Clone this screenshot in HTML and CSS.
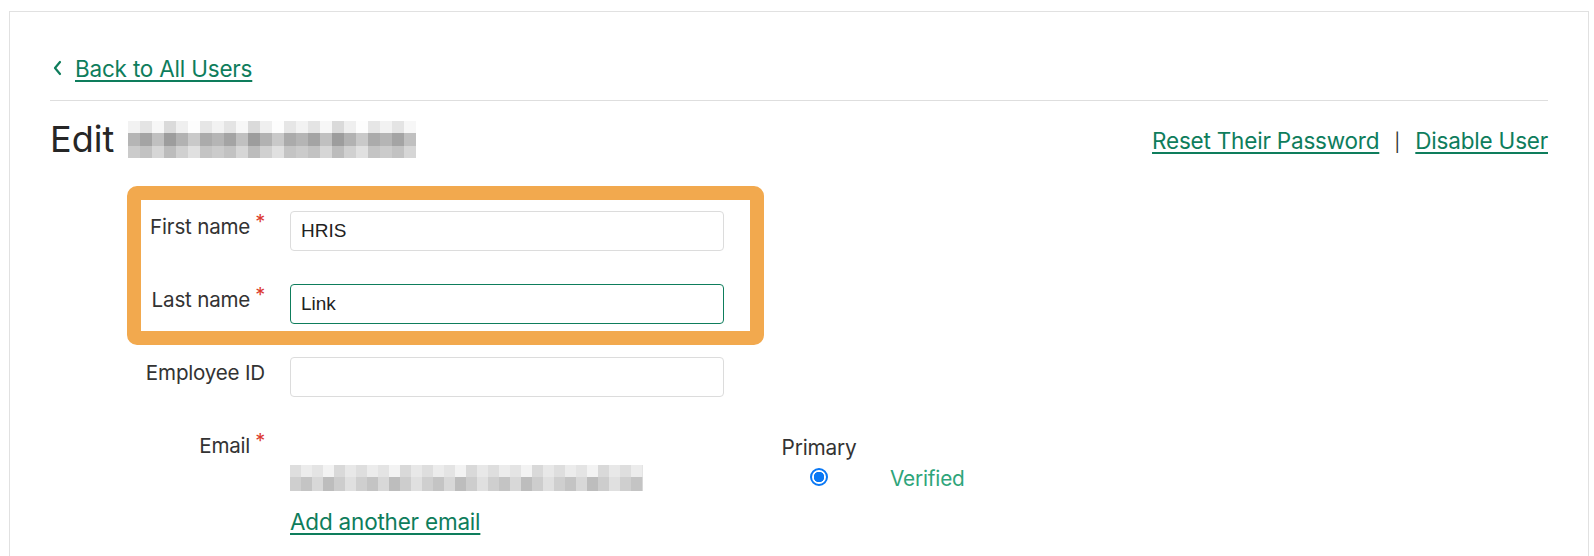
FILE: index.html
```html
<!DOCTYPE html>
<html lang="en">
<head>
<meta charset="utf-8">
<title>Edit user</title>
<link rel="stylesheet" href="styles.css">
</head>
<body>
<div class="card">
  <div class="back-row">
    <svg class="chev" width="10" height="16" viewBox="0 0 10 16"><polyline points="7,2 2,8 7,14" fill="none" stroke="#0e7d5c" stroke-width="2.2" stroke-linecap="round" stroke-linejoin="round"/></svg>
    <a class="link" href="#">Back to All Users</a>
  </div>
  <div class="rule"></div>
  <div class="head-row">
    <h1 class="title">Edit <span class="blur-name" aria-label="redacted"></span></h1>
    <div class="actions">
      <a class="link" href="#">Reset Their Password</a>
      <span class="sep">|</span>
      <a class="link" href="#">Disable User</a>
    </div>
  </div>

  <form class="form">
    <div class="highlight"></div>
    <label class="lbl">First name<span class="req">*</span></label>
    <input class="field" type="text" value="HRIS">
    <label class="lbl">Last name<span class="req">*</span></label>
    <input class="field focus" type="text" value="Link">
    <label class="lbl">Employee ID</label>
    <input class="field" type="text" value="">
    <label class="lbl lbl-email">Email<span class="req">*</span></label>
    <div class="email-cell">
      <div class="email-grid">
        <span></span>
        <span class="col-head">Primary</span>
        <span></span>
        <span class="blur-email"></span>
        <span class="radio"></span>
        <span class="verified">Verified</span>
      </div>
      <a class="link add" href="#">Add another email</a>
    </div>
  </form>
</div>
</body>
</html>
```

FILE: styles.css
```css
* { box-sizing: border-box; }
html, body { margin: 0; padding: 0; background: #fff; }
body {
  font-family: Inter, "Noto Sans", "Liberation Sans", sans-serif;
  color: #2e2e2e;
  height: 556px;
  overflow: hidden;
}
.card {
  margin: 11px 0 0 9px;
  width: 1580px;
  height: 600px;
  border: 1px solid #e1e1e1;
  border-bottom: none;
  padding: 0 40px;
}
.link {
  color: #0e7d5c;
  text-decoration: underline;
  text-decoration-thickness: 2px;
  text-underline-offset: 3px;
  font-size: 22.5px;
  letter-spacing: -0.2px;
}
.back-row {
  display: flex;
  align-items: center;
  gap: 12px;
  padding: 24px 0 0 3px;
  height: 88px;
}
.chev { flex: none; }
.rule {
  height: 1px;
  background: #dedede;
}
.head-row {
  display: flex;
  justify-content: space-between;
  align-items: flex-start;
  padding-top: 16px;
}
.title {
  margin: 0;
  font-size: 36px;
  font-weight: 400;
  color: #262626;
  display: flex;
  align-items: center;
  gap: 14px;
  line-height: 44px;
}
.blur-name {
  display: inline-block;
  width: 288px;
  height: 37px;
  background:
    repeating-linear-gradient(90deg, #f2f2f2 0 12px, #e4e4e4 12px 24px, #f7f7f7 24px 36px, #dadada 36px 48px, #efefef 48px 60px, #fdfdfd 60px 72px, #e6e6e6 72px 84px) 0 0 / 100% 12px no-repeat,
    repeating-linear-gradient(90deg, #b5b5b5 0 12px, #a4a4a4 12px 24px, #c0c0c0 24px 36px, #9d9d9d 36px 48px, #b2b2b2 48px 60px, #c9c9c9 60px 72px, #ababab 72px 84px) 0 12px / 100% 13px no-repeat,
    repeating-linear-gradient(90deg, #cbcbcb 0 12px, #c2c2c2 12px 24px, #d6d6d6 24px 36px, #bcbcbc 36px 48px, #d0d0d0 48px 60px, #e0e0e0 60px 72px, #c4c4c4 72px 84px) 0 25px / 100% 12px no-repeat;
}
.actions {
  display: flex;
  align-items: baseline;
  gap: 15px;
  padding-top: 10px;
}
.sep { font-size: 18px; color: #333; }

.form {
  position: relative;
  display: grid;
  grid-template-columns: 215px 434px;
  column-gap: 25px;
  row-gap: 33px;
  align-items: start;
  margin-top: 50px;
}
.highlight {
  position: absolute;
  left: 77px;
  top: -25px;
  width: 637px;
  height: 159px;
  border: 14px solid #f2a94e;
  border-radius: 10px;
  pointer-events: none;
}
.lbl {
  text-align: right;
  font-size: 20.6px;
  color: #333;
  padding-top: 3px;
  letter-spacing: -0.2px;
}
.req {
  color: #dc3a2f;
  font-size: 20px;
  vertical-align: top;
  position: relative;
  top: -4px;
  margin-left: 5px;
}
.field {
  width: 434px;
  height: 40px;
  border: 1px solid #dcdcdc;
  border-radius: 4px;
  padding: 0 10px;
  font-family: "Liberation Sans", Arial, sans-serif;
  font-size: 19px;
  color: #222;
  outline: none;
  background: #fff;
}
.field.focus { border-color: #0e7d5c; }
.lbl-email { padding-top: 3px; }
.email-cell { padding-top: 5px; }
.email-grid {
  display: grid;
  grid-template-columns: 470px 76px auto;
  column-gap: 21px;
  align-items: center;
  width: 720px;
}
.col-head {
  font-size: 20.8px;
  color: #333;
  text-align: center;
  letter-spacing: -0.2px;
  white-space: nowrap;
}
.blur-email {
  display: block;
  width: 353px;
  height: 26px;
  margin-top: 5px;
  background:
    repeating-linear-gradient(90deg, #dedede 0 11px, #ececec 11px 22px, #e4e4e4 22px 33px, #f3f3f3 33px 44px, #d9d9d9 44px 55px, #e8e8e8 55px 66px) 0 0 / 100% 12px no-repeat,
    repeating-linear-gradient(90deg, #cfcfcf 0 11px, #c4c4c4 11px 22px, #d8d8d8 22px 33px, #bdbdbd 33px 44px, #cdcdcd 44px 55px, #e0e0e0 55px 66px) 0 12px / 100% 14px no-repeat;
}
.radio {
  justify-self: center;
  width: 18px;
  height: 18px;
  border-radius: 50%;
  border: 2px solid #0a78f5;
  background: radial-gradient(circle, #0a78f5 0 5px, #fff 5.5px);
  margin-top: 3px;
}
.verified {
  margin-left: 12px;
  font-size: 20.8px;
  color: #2ea57a;
  margin-top: 6px;
  letter-spacing: -0.2px;
}
.add {
  display: inline-block;
  margin-top: 17px;
}
```
